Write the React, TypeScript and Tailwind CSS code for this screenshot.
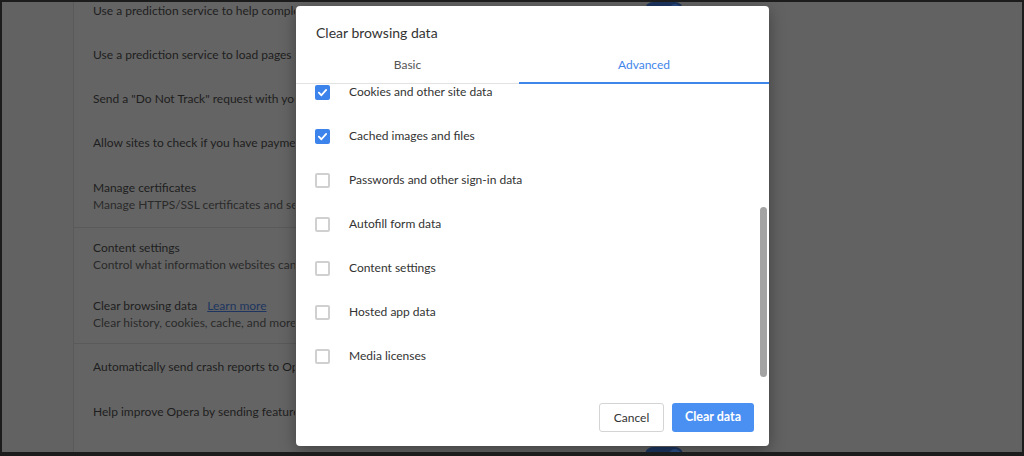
const settingsRows = [
  { title: "Use a prediction service to help complete searches and URLs typed in the address bar", h: "h-[44px]", toggle: true },
  { title: "Use a prediction service to load pages more quickly", h: "h-[44px]", toggle: true },
  { title: 'Send a "Do Not Track" request with your browsing traffic', h: "h-[44px]", toggle: true },
  { title: "Allow sites to check if you have payment methods saved", h: "h-[44px]", toggle: true },
  { title: "Manage certificates", sub: "Manage HTTPS/SSL certificates and settings", h: "h-[64px]", divider: true },
  { title: "Content settings", sub: "Control what information websites can use and what content they can show you", h: "h-[56px]" },
  { title: "Clear browsing data", link: "Learn more", sub: "Clear history, cookies, cache, and more", h: "h-[60px]", divider: true },
  { title: "Automatically send crash reports to Opera", h: "h-[45px]", toggle: true },
  { title: "Help improve Opera by sending feature usage information", h: "h-[44px]", toggle: true },
];

const dataTypes = [
  { label: "Cookies and other site data", checked: true },
  { label: "Cached images and files", checked: true },
  { label: "Passwords and other sign-in data", checked: false },
  { label: "Autofill form data", checked: false },
  { label: "Content settings", checked: false },
  { label: "Hosted app data", checked: false },
  { label: "Media licenses", checked: false },
];

const Checkbox = ({ checked }: { checked: boolean }) =>
  checked ? (
    <div className="w-[15px] h-[15px] rounded-[2px] bg-[#3d83ec] flex items-center justify-center shrink-0">
      <svg width="11" height="11" viewBox="0 0 12 12" fill="none">
        <polyline points="2,6.2 4.8,9 10,3.2" stroke="white" strokeWidth="2" strokeLinecap="round" strokeLinejoin="round" />
      </svg>
    </div>
  ) : (
    <div className="w-[15px] h-[15px] rounded-[2px] border-2 border-[#d0d0d0] shrink-0" />
  );

const Toggle = () => (
  <div className="ml-auto w-[38px] h-[16px] rounded-full bg-[#1c3560] shrink-0 flex items-center justify-end pr-[2px]">
    <div className="w-[12px] h-[12px] rounded-full bg-[#2c4e86]" />
  </div>
);

const App = () => {
  return (
    <div className="relative w-[1024px] h-[456px] overflow-hidden border-2 border-b-4 border-[#1c1c1c] bg-[#626262] flex font-[Lato,sans-serif]">
      {/* dimmed settings page behind the dialog */}
      <div className="w-[71px] shrink-0" />
      <div className="w-[627px] shrink-0 border-l border-[#5a5a5a] bg-[#646464] flex flex-col -mt-[14px]">
        {settingsRows.map((row, i) => (
          <div
            key={i}
            className={`${row.h} shrink-0 flex items-center pl-[19px] pr-[17px] ${row.divider ? "border-b border-[#5a5a5a]" : ""}`}
          >
            <div className="w-[202px] overflow-hidden flex flex-col text-[12px] leading-[17px] whitespace-nowrap">
              <div className="text-[#1e1e1e]">
                {row.title}
                {row.link && <span className="ml-[10px] text-[#1d3560] underline">{row.link}</span>}
              </div>
              {row.sub && <div className="text-[#2a2a2a]">{row.sub}</div>}
            </div>
            {row.toggle && <Toggle />}
          </div>
        ))}
        <div className="h-[44px] shrink-0 flex items-center pr-[17px]">
          <Toggle />
        </div>
      </div>

      {/* Clear browsing data dialog */}
      <div className="absolute left-[294px] top-[4px] w-[473px] h-[440px] bg-white rounded-[4px] shadow-[0_4px_16px_rgba(0,0,0,0.35)] flex flex-col overflow-hidden">
        <div className="pt-[17px] pl-[20px] text-[14px] leading-[20px] text-[#333333]">Clear browsing data</div>
        <div className="mt-[3px] grid grid-cols-[223px_1fr] h-[38px] text-[12px]">
          <div className="flex items-center justify-center pt-[1px] text-[#555555] border-b border-[#e2e2e2]">Basic</div>
          <div className="flex items-center justify-center pt-[1px] text-[#3f86ea] border-b-2 border-[#3f86ea]">Advanced</div>
        </div>
        <div className="relative h-[307px] overflow-hidden">
          <div className="-mt-[14px] flex flex-col">
            {dataTypes.map((item) => (
              <div key={item.label} className="h-[44px] flex items-center gap-[19px] pl-[19px]">
                <Checkbox checked={item.checked} />
                <span className="text-[12px] text-[#333333]">{item.label}</span>
              </div>
            ))}
          </div>
          <div className="absolute right-[2px] top-[123px] w-[7px] h-[170px] rounded-full bg-[#a3a3a3]" />
        </div>
        <div className="flex justify-end gap-[8px] pr-[15px] pt-[12px]">
          <button className="w-[65px] h-[29px] rounded-[3px] border border-[#d4d4d4] bg-white text-[12px] text-[#333333]">
            Cancel
          </button>
          <button className="w-[82px] h-[29px] rounded-[3px] bg-[#4a90f2] text-[12.5px] font-bold text-white">
            Clear data
          </button>
        </div>
      </div>
    </div>
  );
};

export default App;
